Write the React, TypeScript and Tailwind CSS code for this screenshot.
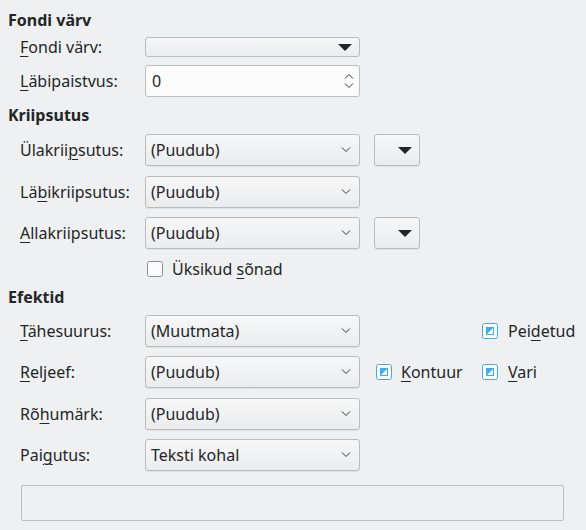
import React from 'react';

const Chevron = ({ up = false }: { up?: boolean }) => (
  <svg width="10" height="6" viewBox="0 0 10 6" className="block">
    <path d={up ? 'M1 5.5 L5 1.5 L9 5.5' : 'M1 0.5 L5 4.5 L9 0.5'} fill="none" stroke="#31363b" strokeWidth="1" />
  </svg>
);

const Triangle = () => (
  <svg width="14" height="7" viewBox="0 0 14 7" className="block">
    <path d="M0 0 H14 L7 7 Z" fill="#232627" />
  </svg>
);

const Combo = ({ text }: { text: string }) => (
  <div className="flex h-[32px] w-[215px] items-center justify-between rounded-[3px] border border-[#b9bbbd] bg-gradient-to-b from-[#f7f7f8] to-[#ebeced] pl-[5px] pr-[8px] shadow-[0_1px_0_rgba(0,0,0,0.06)]">
    <span>{text}</span>
    <Chevron />
  </div>
);

const SmallButton = () => (
  <div className="ml-[14px] flex h-[32px] w-[46px] items-center justify-end rounded-[3px] border border-[#b9bbbd] bg-gradient-to-b from-[#f7f7f8] to-[#ebeced] pr-[7px] shadow-[0_1px_0_rgba(0,0,0,0.06)]">
    <Triangle />
  </div>
);

const Checked = () => (
  <svg width="16" height="16" viewBox="0 0 16 16" className="block shrink-0">
    <rect x="0.5" y="0.5" width="15" height="15" rx="2" fill="#fcfcfc" stroke="#3daee9" />
    <rect x="4" y="4" width="8" height="8" fill="#3daee9" />
    <path d="M11 5 V11 H5 Z" fill="#fcfcfc" />
  </svg>
);

const Unchecked = () => (
  <svg width="16" height="16" viewBox="0 0 16 16" className="block shrink-0">
    <rect x="0.5" y="0.5" width="15" height="15" rx="2" fill="#fcfcfc" stroke="#8c8f92" />
  </svg>
);

const U = ({ children }: { children: React.ReactNode }) => (
  <span className="underline decoration-1 underline-offset-[3px]">{children}</span>
);

const Label = ({ children }: { children: React.ReactNode }) => (
  <div className="w-[145px] shrink-0 pl-[20px]">{children}</div>
);

const Header = ({ children, className }: { children: React.ReactNode; className: string }) => (
  <div className={`h-[22px] pl-[8px] font-bold leading-[22px] ${className}`}>{children}</div>
);

export default function App() {
  return (
    <div
      className="flex h-[530px] w-[586px] flex-col overflow-hidden bg-[#eff0f1] text-[16px] leading-[22px] text-[#232627]"
      style={{ fontFamily: '"Noto Sans", sans-serif' }}
    >
      <Header className="mt-[9px]">Fondi värv</Header>

      <div className="mt-[6px] flex h-[20px] items-center">
        <Label>
          <U>F</U>ondi värv:
        </Label>
        <div className="flex h-[20px] w-[215px] items-center justify-end rounded-[3px] border border-[#b9bbbd] bg-gradient-to-b from-[#f7f7f8] to-[#ebeced] pr-[7px]">
          <Triangle />
        </div>
      </div>

      <div className="mt-[8px] flex h-[32px] items-center">
        <Label>
          <U>L</U>äbipaistvus:
        </Label>
        <div className="flex h-[32px] w-[215px] items-center justify-between rounded-[3px] border border-[#bcbebf] bg-[#fcfcfc] pl-[6px] pr-[5px]">
          <span>0</span>
          <div className="flex flex-col gap-[4px]">
            <Chevron up />
            <Chevron />
          </div>
        </div>
      </div>

      <Header className="mt-[7px]">Kriipsutus</Header>

      <div className="mt-[8px] flex h-[32px] items-center">
        <Label>
          Ülakrii<U>p</U>sutus:
        </Label>
        <Combo text="(Puudub)" />
        <SmallButton />
      </div>

      <div className="mt-[10px] flex h-[32px] items-center">
        <Label>
          Lä<U>b</U>ikriipsutus:
        </Label>
        <Combo text="(Puudub)" />
      </div>

      <div className="mt-[9px] flex h-[32px] items-center">
        <Label>
          <U>A</U>llakriipsutus:
        </Label>
        <Combo text="(Puudub)" />
        <SmallButton />
      </div>

      <div className="mt-[9px] flex h-[22px] items-center pl-[147px]">
        <Unchecked />
        <span className="ml-[9px]">
          Üksikud <U>s</U>õnad
        </span>
      </div>

      <Header className="mt-[6px]">Efektid</Header>

      <div className="mt-[7px] flex h-[32px] items-center">
        <Label>
          <U>T</U>ähesuurus:
        </Label>
        <Combo text="(Muutmata)" />
        <div className="ml-[122px] flex items-center">
          <Checked />
          <span className="ml-[10px]">
            Pei<U>d</U>etud
          </span>
        </div>
      </div>

      <div className="mt-[9px] flex h-[32px] items-center">
        <Label>
          <U>R</U>eljeef:
        </Label>
        <Combo text="(Puudub)" />
        <div className="ml-[16px] flex w-[106px] items-center">
          <Checked />
          <span className="ml-[9px]">
            <U>K</U>ontuur
          </span>
        </div>
        <div className="flex items-center">
          <Checked />
          <span className="ml-[10px]">
            <U>V</U>ari
          </span>
        </div>
      </div>

      <div className="mt-[10px] flex h-[32px] items-center">
        <Label>
          Rõ<U>h</U>umärk:
        </Label>
        <Combo text="(Puudub)" />
      </div>

      <div className="mt-[9px] flex h-[32px] items-center">
        <Label>
          Pai<U>g</U>utus:
        </Label>
        <Combo text="Teksti kohal" />
      </div>

      <div className="ml-[21px] mt-[14px] h-[36px] w-[543px] rounded-[2px] border border-[#bcbebf] bg-[#eff0f1]" />
    </div>
  );
}
